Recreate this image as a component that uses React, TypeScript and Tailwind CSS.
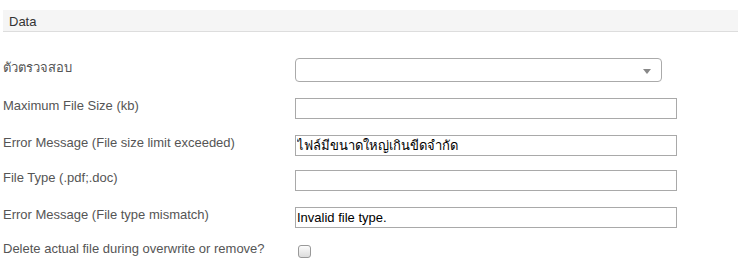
import { useState } from 'react';

type Field = {
  label: string;
  value?: string;
  gap: string;
};

const fields: Field[] = [
  { label: 'Maximum File Size (kb)', gap: 'mt-[16px]' },
  { label: 'Error Message (File size limit exceeded)', value: 'ไฟล์มีขนาดใหญ่เกินขีดจำกัด', gap: 'mt-[16px]' },
  { label: 'File Type (.pdf;.doc)', gap: 'mt-[14px]' },
  { label: 'Error Message (File type mismatch)', value: 'Invalid file type.', gap: 'mt-[16px]' },
];

export default function App() {
  const [deleteFile, setDeleteFile] = useState(false);

  return (
    <div className="min-h-screen bg-white font-['Liberation_Sans',Arial,sans-serif] text-[13px] text-[#555]">
      {/* Section header */}
      <div className="ml-[3px] mt-[10px] h-[22px] border-b border-[#dddddd] bg-[#f5f5f5] pl-[6px] pt-[4px] leading-[15px] text-[#333]">
        Data
      </div>

      <div className="mt-[26px] flex flex-col pl-[3px]">
        {/* Validator select */}
        <div className="flex items-center">
          <label className="mb-[5px] w-[292px] shrink-0 leading-[15px]">ตัวตรวจสอบ</label>
          <div className="relative flex h-[24px] w-[367px] items-center rounded-[4px] border border-[#aaaaaa] bg-white">
            <span className="absolute right-[10px] top-[10px] h-0 w-0 border-x-[4px] border-t-[5px] border-x-transparent border-t-[#888]" />
          </div>
        </div>

        {fields.map((f) => (
          <div key={f.label} className={`flex items-start ${f.gap}`}>
            <label className="w-[292px] shrink-0 leading-[15px]">{f.label}</label>
            <input
              type="text"
              defaultValue={f.value ?? ''}
              className="h-[21px] w-[382px] border border-[#a9a9a9] px-[1px] text-[13px] leading-[15px] text-black outline-none"
            />
          </div>
        ))}

        {/* Delete checkbox */}
        <div className="mt-[13px] flex items-start">
          <label className="w-[292px] shrink-0 leading-[15px]">Delete actual file during overwrite or remove?</label>
          <button
            type="button"
            onClick={() => setDeleteFile(!deleteFile)}
            className="ml-[3px] mt-[4px] h-[13px] w-[13px] rounded-[3px] border border-[#999] bg-gradient-to-b from-[#fcfcfc] to-[#dcdcdc]"
          >
            {deleteFile && <span className="block text-[10px] leading-[11px] text-black">✓</span>}
          </button>
        </div>
      </div>
    </div>
  );
}
